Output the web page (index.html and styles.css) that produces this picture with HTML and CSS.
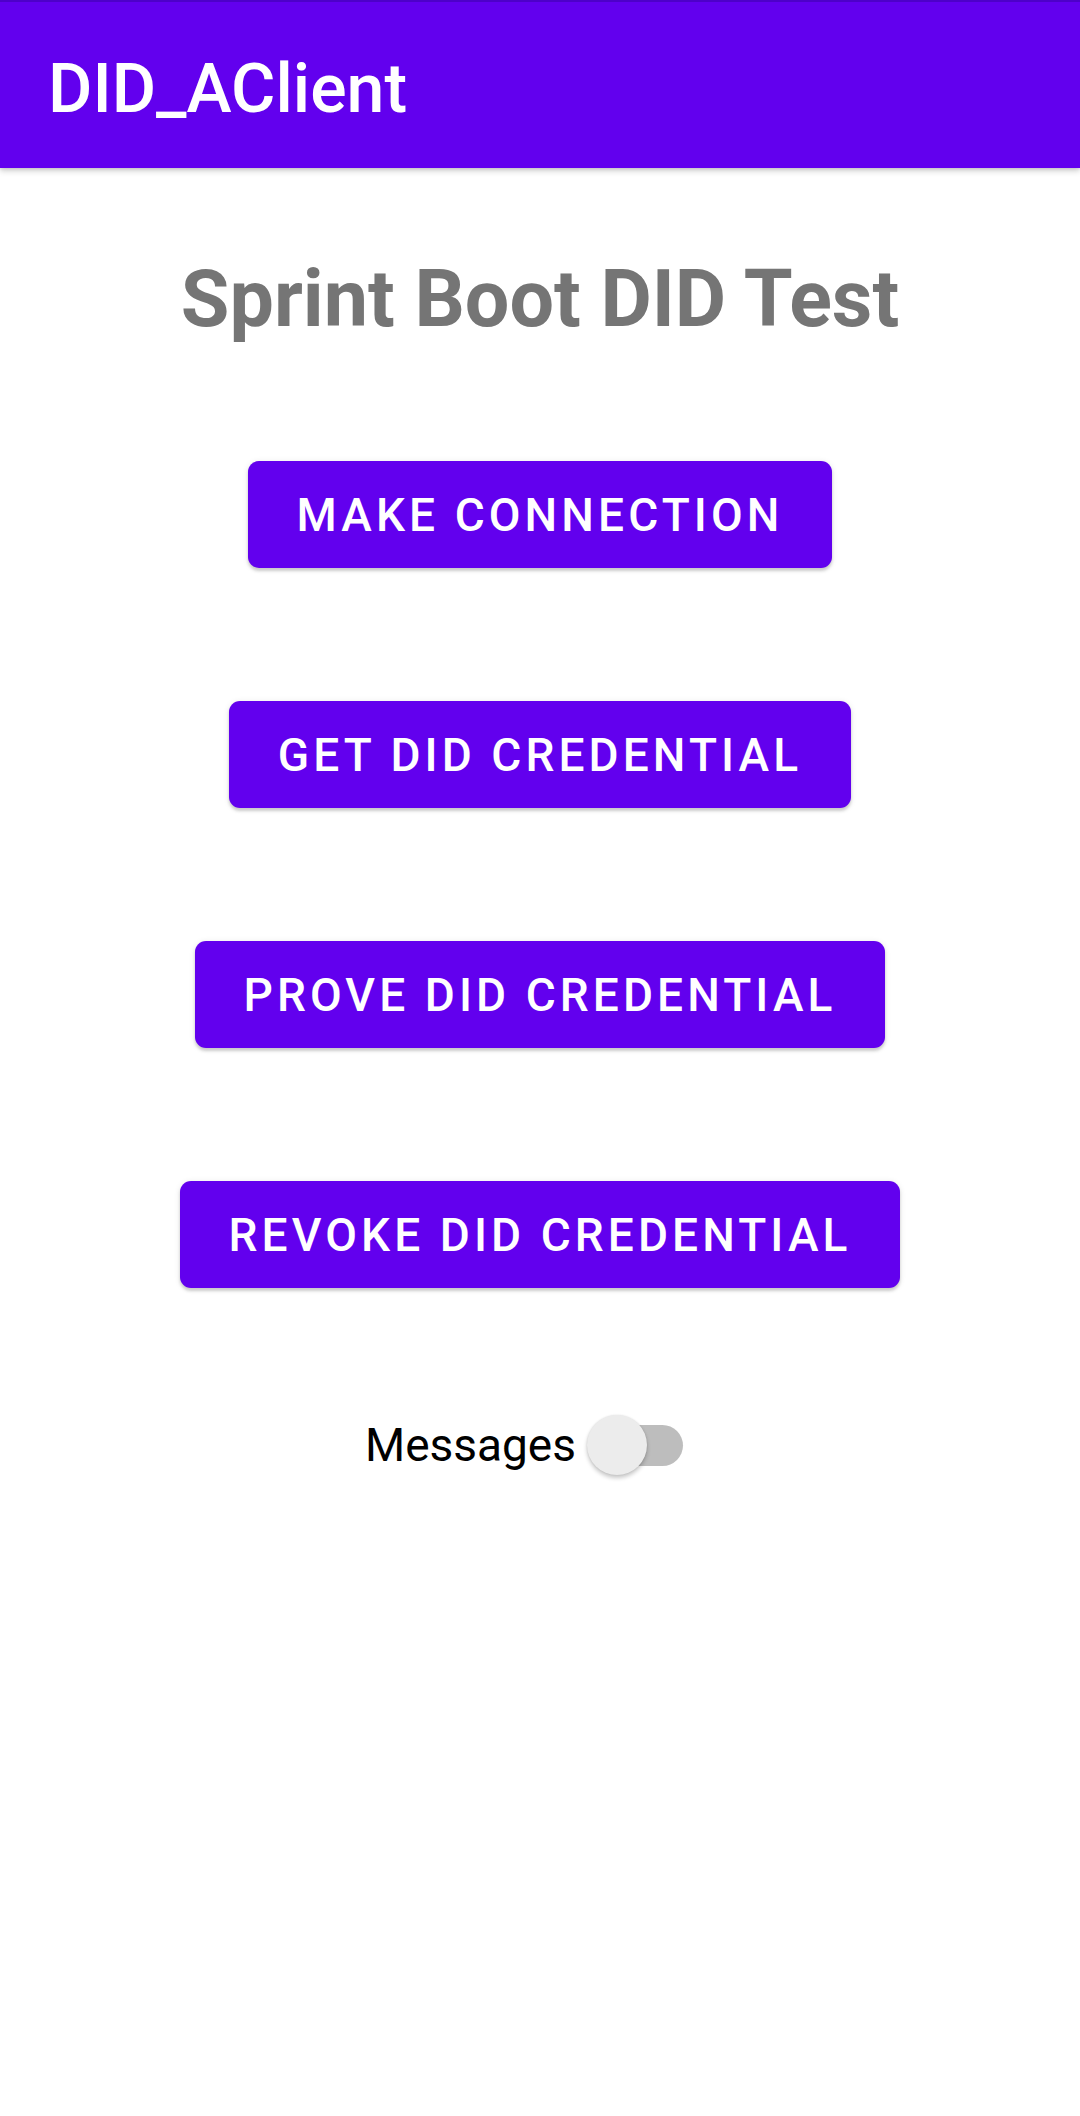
FILE: index.html
```html
<!DOCTYPE html>
<html lang="en">
<head>
<meta charset="utf-8">
<title>DID_AClient</title>
<link rel="stylesheet" href="styles.css">
</head>
<body>
  <header class="app-bar">
    <h1 class="app-title">DID_AClient</h1>
  </header>
  <main class="content">
    <h2 class="heading">Sprint Boot DID Test</h2>
    <div class="buttons">
      <button class="btn">Make Connection</button>
      <button class="btn">Get DID Credential</button>
      <button class="btn">Prove DID Credential</button>
      <button class="btn">Revoke DID Credential</button>
    </div>
    <label class="switch-row">
      <span class="switch-label">Messages</span>
      <span class="switch">
        <span class="track"></span>
        <span class="thumb"></span>
      </span>
    </label>
  </main>
</body>
</html>
```
FILE: styles.css
```css
* { box-sizing: border-box; }
html, body {
  margin: 0;
  padding: 0;
  background: #ffffff;
  font-family: Roboto, "Noto Sans", "Liberation Sans", sans-serif;
}
body {
  width: 1080px;
  min-height: 2116px;
}
.app-bar {
  height: 168px;
  background: #6200ee;
  border-top: 2px solid #4d00c9;
  display: flex;
  align-items: center;
  padding-left: 48px;
  box-shadow: 0 3px 6px rgba(0,0,0,0.18), 0 1px 3px rgba(0,0,0,0.1);
  position: relative;
  z-index: 1;
}
.app-title {
  margin: 0;
  color: #ffffff;
  font-size: 68px;
  font-weight: 500;
  line-height: 1;
  padding-top: 8px;
}
.content {
  display: flex;
  flex-direction: column;
  align-items: center;
}
.heading {
  margin: 85px 0 0 0;
  font-size: 79px;
  font-weight: 700;
  color: #757575;
  line-height: 93px;
}
.buttons {
  margin-top: 115px;
  display: flex;
  flex-direction: column;
  align-items: center;
  gap: 133px;
}
.btn {
  height: 107px;
  padding: 0 49px;
  border: none;
  border-radius: 11px;
  background: #6200ee;
  color: #ffffff;
  font-family: Roboto, "Noto Sans", "Liberation Sans", sans-serif;
  font-size: 46px;
  font-weight: 500;
  letter-spacing: 4.1px;
  text-transform: uppercase;
  box-shadow: 0 3px 3px rgba(0,0,0,0.16), 0 1px 6px rgba(0,0,0,0.1);
}
.switch-row {
  margin-top: 127px;
  display: flex;
  align-items: center;
  gap: 11px;
  padding-right: 32px;
}
.switch-label {
  font-size: 46px;
  color: #000000;
  line-height: 60px;
}
.switch {
  position: relative;
  width: 96px;
  height: 60px;
}
.track {
  position: absolute;
  left: 4px;
  right: 0;
  top: 10px;
  height: 41px;
  border-radius: 21px;
  background: #bdbdbd;
}
.thumb {
  position: absolute;
  left: 0;
  top: 0;
  width: 60px;
  height: 60px;
  border-radius: 50%;
  background: #ececec;
  box-shadow: 0 3px 4px rgba(0,0,0,0.22), 0 0 2px rgba(0,0,0,0.1);
}
```
